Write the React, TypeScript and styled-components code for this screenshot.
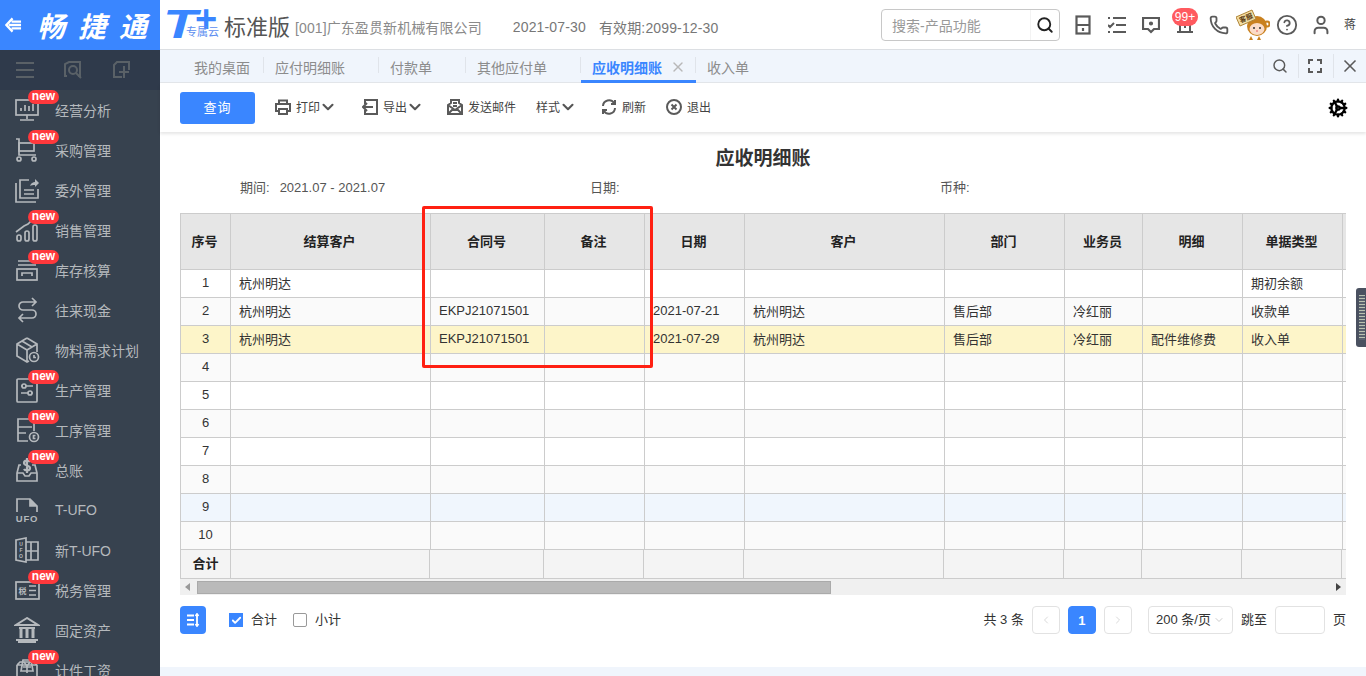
import React from "react";
import styled, { createGlobalStyle } from "styled-components";
import {
  Check,
  ChevronDown,
  ChevronLeft,
  ChevronRight,
  CircleHelp,
  Cog,
  Phone,
  Search,
  User,
  X,
} from "lucide-react";

const BLUE = "#3a86ff";
const FONT = `"Liberation Sans", "Noto Sans CJK SC", sans-serif`;

const GlobalStyle = createGlobalStyle`
  html, body {
    margin: 0;
    padding: 0;
    height: 100%;
    overflow: hidden;
    background: #fff;
    font-family: ${FONT};
  }
  #root {
    height: 100%;
  }
`;

const Page = styled.div`
  display: flex;
  width: 1366px;
  height: 676px;
  overflow: hidden;
  position: relative;
`;

const Sidebar = styled.aside`
  width: 160px;
  flex: none;
  display: flex;
  flex-direction: column;
  background: #37424f;
  overflow: hidden;
`;

const Brand = styled.div`
  height: 50px;
  flex: none;
  background: ${BLUE};
  color: #fff;
  display: flex;
  align-items: center;
  padding-left: 5px;
  gap: 15px;
`;

const BrandName = styled.span`
  font-size: 28px;
  font-weight: 700;
  font-style: italic;
  letter-spacing: 13px;
  white-space: nowrap;
`;

const ToolRow = styled.div`
  height: 40px;
  flex: none;
  background: #2f3a4b;
  color: #5a6167;
  display: flex;
  align-items: center;
  padding-left: 16px;
  gap: 30px;
`;

const MenuItem = styled.div`
  height: 40px;
  flex: none;
  position: relative;
  display: flex;
  align-items: center;
  padding-left: 14px;
  gap: 15px;
  color: #b5b9bd;
  font-size: 14px;
  white-space: nowrap;
`;

const NewBadge = styled.span`
  position: absolute;
  left: 28px;
  top: 0;
  width: 31px;
  height: 14px;
  border-radius: 7px;
  background: #ff383c;
  color: #fff;
  font-size: 12px;
  font-weight: 700;
  line-height: 13px;
  text-align: center;
`;

const MenuIcon = styled.svg`
  width: 26px;
  height: 26px;
  flex: none;
  fill: none;
  stroke: currentColor;
  stroke-width: 1.7;
`;

const Main = styled.main`
  flex: 1;
  min-width: 0;
  display: flex;
  flex-direction: column;
`;

const Header = styled.header`
  height: 50px;
  flex: none;
  box-sizing: border-box;
  border-bottom: 1px solid #dcdfe3;
  display: flex;
  align-items: center;
  padding: 0 10px 0 5px;
  white-space: nowrap;
`;

const LogoMark = styled.div`
  position: relative;
  width: 54px;
  height: 40px;
  flex: none;
  color: ${BLUE};
`;

const LogoT = styled.span`
  position: absolute;
  left: -2px;
  top: -2px;
  font-size: 40px;
  line-height: 42px;
  font-weight: 700;
  font-style: italic;
  transform: scaleX(1.4);
  transform-origin: left center;
`;

const LogoPlus = styled.span`
  position: absolute;
  left: 30px;
  top: -4px;
  font-size: 38px;
  line-height: 36px;
  font-weight: 700;
`;

const LogoCloud = styled.span`
  position: absolute;
  left: 21px;
  top: 21px;
  font-size: 11px;
  line-height: 12px;
  color: #5d8ef0;
`;

const Edition = styled.span`
  margin-left: 5px;
  font-size: 22px;
  color: #555;
`;

const Company = styled.span`
  margin-left: 5px;
  font-size: 14px;
  letter-spacing: 0.1px;
  color: #8a8a8a;
  padding-top: 5px;
`;

const HeaderDate = styled.span<{ $left: number }>`
  margin-left: ${(p) => p.$left}px;
  font-size: 14px;
  letter-spacing: 0.15px;
  color: #777;
  padding-top: 5px;
`;

const SearchBox = styled.div`
  margin-left: auto;
  width: 179px;
  height: 32px;
  box-sizing: border-box;
  border: 1px solid #c8c8c8;
  border-radius: 4px;
  display: flex;
  align-items: center;
  color: #999;
  font-size: 14px;
  flex: none;
`;

const SearchText = styled.span`
  flex: 1;
  padding-left: 10px;
`;

const SearchAction = styled.span`
  width: 28px;
  height: 30px;
  border-left: 1px solid #f3f3f3;
  color: #222;
  display: flex;
  align-items: center;
  justify-content: center;
`;

const HeadIcons = styled.div`
  margin-left: 6px;
  display: flex;
  align-items: center;
`;

const HeadIcon = styled.span`
  position: relative;
  width: 34px;
  height: 40px;
  color: #5a5a5a;
  display: flex;
  align-items: center;
  justify-content: center;
`;

const CountBadge = styled.span`
  position: absolute;
  left: 4px;
  top: 3px;
  width: 26px;
  height: 18px;
  border-radius: 9px;
  background: #ff5a5f;
  color: #fff;
  font-size: 12px;
  line-height: 18px;
  text-align: center;
`;

const UserName = styled.span`
  margin-left: 6px;
  font-size: 12px;
  color: #444;
  padding-bottom: 3px;
`;

const TabBar = styled.nav`
  height: 33px;
  flex: none;
  box-sizing: border-box;
  background: #f0f5fc;
  border-bottom: 1px solid #e3e6ea;
  display: flex;
  padding-left: 20px;
`;

const Tab = styled.div<{ $active?: boolean; $first?: boolean; $last?: boolean }>`
  position: relative;
  height: 33px;
  box-sizing: border-box;
  padding: ${(p) => (p.$first ? "0 14px" : "0 34px 0 11px")};
  display: flex;
  align-items: center;
  font-size: 14px;
  font-weight: ${(p) => (p.$active ? 700 : 400)};
  color: ${(p) => (p.$active ? BLUE : "#8c8c8c")};
  border-bottom: ${(p) => (p.$active ? `3px solid ${BLUE}` : "none")};
  padding-top: ${(p) => (p.$active ? "3px" : "0")};
  &::after {
    content: "";
    display: ${(p) => (p.$last ? "none" : "block")};
    position: absolute;
    right: 0;
    top: 7px;
    height: 16px;
    width: 1px;
    background: #e0e4ea;
  }
`;

const TabClose = styled(X)`
  position: absolute;
  right: 10px;
  top: 9px;
  color: #b8b8b8;
`;

const TabTools = styled.div`
  margin-left: auto;
  display: flex;
  padding-top: 4px;
  height: 24px;
`;

const TabTool = styled.span`
  width: 35px;
  height: 24px;
  border-left: 1px solid #e0e4ea;
  color: #5a5a5a;
  display: flex;
  align-items: center;
  justify-content: center;
  padding-right: 2px;
  box-sizing: border-box;
  &:last-child {
    width: 33px;
    padding-right: 0;
  }
`;

const Toolbar = styled.div`
  height: 49px;
  flex: none;
  display: flex;
  align-items: center;
  padding: 0 20px;
  box-shadow: 0 2px 3px rgba(0, 0, 0, 0.1);
  position: relative;
`;

const QueryButton = styled.button`
  width: 75px;
  height: 32px;
  margin: 1px 4px 0 0;
  border: none;
  border-radius: 3px;
  background: ${BLUE};
  color: #fff;
  font: 13px ${FONT};
  letter-spacing: 1px;
  padding: 0 0 3px;
`;

const ToolItem = styled.span<{ $gap: number }>`
  margin: 0 0 2px ${(p) => p.$gap}px;
  display: flex;
  align-items: center;
  gap: 5px;
  font-size: 12px;
  color: #444;
  white-space: nowrap;
`;

const ToolChevron = styled(ChevronDown)`
  margin: 0 -4px 0 -6px;
  color: #555;
`;

const ToolIcon = styled.svg`
  width: 16px;
  height: 16px;
  fill: none;
  stroke: #5a5a5a;
  stroke-width: 2;
`;

const GearSlot = styled.span`
  margin: 0 -2px 0 auto;
  display: flex;
  color: #000;
`;

const Content = styled.div`
  flex: 1;
  min-height: 0;
  padding: 0 20px;
`;

const Title = styled.h1`
  margin: 0;
  padding-top: 15px;
  height: 29px;
  font-size: 19px;
  line-height: 24px;
  font-weight: 700;
  color: #333;
  text-align: center;
`;

const Meta = styled.div`
  display: grid;
  grid-template-columns: repeat(3, 350px);
  padding-left: 60px;
  height: 37px;
  font-size: 13px;
  line-height: 24px;
  color: #555;
`;

const MetaValue = styled.span`
  margin-left: 10px;
`;

const Grid = styled.div`
  position: relative;
  width: 1166px;
`;

const Clip = styled.div`
  overflow: hidden;
`;

const Table = styled.table`
  table-layout: fixed;
  border-collapse: separate;
  border-spacing: 0;
  width: 1243px;
  font-size: 13px;
  color: #333;
`;

const HeadCell = styled.th`
  height: 57px;
  padding: 0 2px 3px 0;
  box-sizing: border-box;
  background: #e6e6e6;
  border-top: 1px solid #ccc;
  border-right: 1px solid #ccc;
  border-bottom: 1px solid #ccc;
  font-weight: 700;
  color: #222;
  &:first-child {
    border-left: 1px solid #ccc;
  }
`;

const Row = styled.tr<{ $tone?: string }>`
  background: ${(p) => p.$tone};
`;

const Cell = styled.td<{ $center?: boolean }>`
  height: 28px;
  box-sizing: border-box;
  padding: 0 ${(p) => (p.$center ? "0" : "8px")} 2px;
  border-right: 1px solid #ccc;
  border-bottom: 1px solid #ccc;
  text-align: ${(p) => (p.$center ? "center" : "left")};
  white-space: nowrap;
  overflow: hidden;
  &:first-child {
    border-left: 1px solid #ccc;
  }
`;

const TotalCell = styled.td`
  height: 29px;
  box-sizing: border-box;
  padding: 0 0 3px;
  background: #f4f4f4;
  border-right: 1px solid #ccc;
  border-bottom: 1px solid #ccc;
  text-align: center;
  font-weight: 700;
  color: #222;
  &:first-child {
    border-left: 1px solid #ccc;
  }
`;

const ScrollBar = styled.div`
  height: 16px;
  background: #f0f0f0;
  display: flex;
  align-items: center;
  justify-content: space-between;
  color: #555;
`;

const ScrollArrow = styled.span<{ $right?: boolean }>`
  width: 0;
  height: 0;
  margin: 0 5px;
  border-top: 4px solid transparent;
  border-bottom: 4px solid transparent;
  border-left: ${(p) => (p.$right ? "5px solid #444" : "0")};
  border-right: ${(p) => (p.$right ? "0" : "5px solid #999")};
`;

const ScrollThumb = styled.div`
  width: 634px;
  height: 13px;
  box-sizing: border-box;
  background: #bababa;
  border: 1px solid #aaa;
  margin-left: 2px;
  margin-right: auto;
`;

const Marker = styled.div`
  position: absolute;
  left: 242px;
  top: -7px;
  width: 231px;
  height: 162px;
  box-sizing: border-box;
  border: 3px solid #ff2012;
  border-radius: 2px;
  pointer-events: none;
`;

const Footer = styled.div`
  width: 1166px;
  height: 30px;
  margin-top: 10px;
  display: flex;
  align-items: center;
  font-size: 13px;
  color: #333;
`;

const FooterLabel = styled.span`
  padding-bottom: 3px;
`;

const SortButton = styled.span`
  width: 26px;
  height: 28px;
  border-radius: 4px;
  background: ${BLUE};
  color: #fff;
  display: flex;
  align-items: center;
  justify-content: center;
  margin-right: 23px;
`;

const CheckRow = styled.label`
  display: flex;
  align-items: center;
  gap: 8px;
  margin-right: 16px;
`;

const CheckBox = styled.span<{ $on?: boolean }>`
  width: 14px;
  height: 14px;
  box-sizing: border-box;
  border: 1px solid ${(p) => (p.$on ? BLUE : "#999")};
  border-radius: ${(p) => (p.$on ? "0" : "2px")};
  background: ${(p) => (p.$on ? BLUE : "#fff")};
  color: #fff;
  display: flex;
  align-items: center;
  justify-content: center;
`;

const Pager = styled.div`
  margin-left: auto;
  display: flex;
  align-items: center;
  gap: 8px;
  white-space: nowrap;
`;

const PageButton = styled.span<{ $active?: boolean }>`
  width: 28px;
  height: 28px;
  box-sizing: border-box;
  border: 1px solid ${(p) => (p.$active ? BLUE : "#e2e2e2")};
  border-radius: 4px;
  background: ${(p) => (p.$active ? BLUE : "#fff")};
  color: ${(p) => (p.$active ? "#fff" : "#ccc")};
  font-weight: ${(p) => (p.$active ? 700 : 400)};
  display: flex;
  align-items: center;
  justify-content: center;
`;

const PageSize = styled.span`
  width: 85px;
  height: 28px;
  margin-left: 8px;
  box-sizing: border-box;
  border: 1px solid #e2e2e2;
  border-radius: 4px;
  padding-left: 7px;
  display: flex;
  align-items: center;
  gap: 2px;
  color: #333;
`;

const PageInput = styled.span`
  width: 50px;
  height: 28px;
  box-sizing: border-box;
  border: 1px solid #e2e2e2;
  border-radius: 4px;
`;

const BottomStrip = styled.div`
  height: 9px;
  flex: none;
  background: #f0f5fc;
`;

const Handle = styled.div`
  position: absolute;
  right: 0;
  top: 288px;
  width: 10px;
  height: 59px;
  box-sizing: border-box;
  border-radius: 3px 0 0 3px;
  background: #4a5160;
  padding: 7px 1px 7px 3px;
`;

const HandleBars = styled.div`
  height: 100%;
  background: repeating-linear-gradient(
    to bottom,
    #b9c2b0 0,
    #b9c2b0 1px,
    #59616e 1px,
    #59616e 3px
  );
`;

const menuIcons: Record<string, React.ReactNode> = {
  monitor: (
    <>
      <rect x="2" y="3" width="22" height="15" />
      <path d="M13 18v4M6 23h14M7 14v-3M11 14V8M15 14v-5M19 14V7" />
    </>
  ),
  cart: (
    <>
      <path d="M2 2h3v16h17" />
      <rect x="5" y="6" width="15" height="8" />
      <circle cx="5" cy="22" r="2" />
      <circle cx="20" cy="22" r="2" />
    </>
  ),
  outsource: (
    <>
      <path d="M15 3H6v18h18v-9" />
      <path d="M2 6v19h20M10 13h10M10 17h10" />
      <path d="M16 9c1-3 3-4 5-4V2l4 4-4 4V8c-2 0-4 0-5 1z" fill="currentColor" stroke="none" />
    </>
  ),
  sales: (
    <>
      <path d="M2 15l8-6 4-2 6-6" />
      <rect x="3" y="18" width="4" height="6" rx="2" />
      <rect x="11" y="14" width="4" height="10" rx="2" />
      <rect x="19" y="8" width="4" height="16" rx="2" />
    </>
  ),
  stock: (
    <>
      <path d="M4 4h18M4 8h18" />
      <rect x="3" y="12" width="20" height="11" />
      <path d="M8 19v-3h10v3" />
    </>
  ),
  exchange: (
    <path d="M18 1l4 4-4 4M22 5H9a4 4 0 0 0-4 4 4 4 0 0 0 4 4h9a4 4 0 0 1 4 4 4 4 0 0 1-4 4H5M9 17l-4 4 4 4" />
  ),
  box: (
    <>
      <path d="M13 1l10 6v8M13 1L3 7v12l10 6 2-1M3 7l10 6 10-6M13 13v12M8 4l10 6" />
      <circle cx="20" cy="20" r="4.5" />
      <path d="M20 18v2.500h2" />
    </>
  ),
  sliders: (
    <>
      <rect x="3" y="2" width="20" height="23" rx="1" />
      <path d="M7 9h12M7 16h12" />
      <circle cx="10" cy="9" r="2" fill="#37424f" />
      <circle cx="16" cy="16" r="2" fill="#37424f" />
    </>
  ),
  doc: (
    <>
      <path d="M14 24H4V2h12l4 4v8M4 10h14M4 16h8" />
      <circle cx="20" cy="20" r="4.500" />
      <path d="M21.500 18.500h-2v3h2" />
    </>
  ),
  ledger: (
    <>
      <path d="M7 8H5l-2 8v8h20v-8l-2-8h-3" />
      <path d="M3 16h6l2 3h4l2-3h6" />
      <path d="M16 5c-1-2-6-2-6 1s6 2 6 5-5 3-6 1M13 1v15" strokeWidth="2.200" />
    </>
  ),
  ufo: (
    <>
      <path d="M3 15V2h13l7 7v6" />
      <path d="M16 2v7h7" fill="currentColor" />
      <text x="13" y="25" textAnchor="middle" fontSize="9.500" fontWeight="700" letterSpacing="0.8" fill="currentColor" stroke="none">UFO</text>
    </>
  ),
  newUfo: (
    <>
      <path d="M2 3l10-2v24L2 23zM12 5h12v18H12M17 5v18M12 14h12" />
      <text x="7" y="9" textAnchor="middle" fontSize="5" fontWeight="700" fill="currentColor" stroke="none">U</text>
      <text x="7" y="15" textAnchor="middle" fontSize="5" fontWeight="700" fill="currentColor" stroke="none">F</text>
      <text x="7" y="21" textAnchor="middle" fontSize="5" fontWeight="700" fill="currentColor" stroke="none">O</text>
    </>
  ),
  tax: (
    <>
      <rect x="2" y="5" width="23" height="17" />
      <text x="8.500" y="17" textAnchor="middle" fontSize="8" fontWeight="700" fill="currentColor" stroke="none">税</text>
      <path d="M15 9h7M15 13.500h7M15 18h7" />
    </>
  ),
  bank: (
    <>
      <path d="M13 1L2 8h22zM5 11h16M2 23h22M4 25h18" strokeWidth="2" />
      <path d="M7 12v9M13 12v9M19 12v9" strokeWidth="3" />
    </>
  ),
  wage: (
    <>
      <path d="M3 8v17h20V8M3 8l3-3h14l3 3M3 8h20" />
      <path d="M9 3h8l2 11H7zM10 5l3 4 3-4M9 10h8M13 9v7" />
    </>
  ),
};

const menu = [
  { name: "经营分析", icon: "monitor", isNew: true },
  { name: "采购管理", icon: "cart", isNew: true },
  { name: "委外管理", icon: "outsource" },
  { name: "销售管理", icon: "sales", isNew: true },
  { name: "库存核算", icon: "stock", isNew: true },
  { name: "往来现金", icon: "exchange" },
  { name: "物料需求计划", icon: "box" },
  { name: "生产管理", icon: "sliders", isNew: true },
  { name: "工序管理", icon: "doc", isNew: true },
  { name: "总账", icon: "ledger", isNew: true },
  { name: "T-UFO", icon: "ufo" },
  { name: "新T-UFO", icon: "newUfo" },
  { name: "税务管理", icon: "tax", isNew: true },
  { name: "固定资产", icon: "bank" },
  { name: "计件工资", icon: "wage", isNew: true },
];

const tabs = ["应付明细账", "付款单", "其他应付单"];

const columns = [
  { title: "序号", width: 51 },
  { title: "结算客户", width: 200 },
  { title: "合同号", width: 114 },
  { title: "备注", width: 100 },
  { title: "日期", width: 100 },
  { title: "客户", width: 200 },
  { title: "部门", width: 120 },
  { title: "业务员", width: 78 },
  { title: "明细", width: 100 },
  { title: "单据类型", width: 100 },
  { title: "", width: 80 },
];

const totalWidths = [51, 199, 114, 100, 100, 200, 120, 78, 100, 100, 81];

const rows: { cells: string[]; tone: string }[] = [
  { cells: ["杭州明达", "", "", "", "", "", "", "", "期初余额", ""], tone: "#fff" },
  {
    cells: ["杭州明达", "EKPJ21071501", "", "2021-07-21", "杭州明达", "售后部", "冷红丽", "", "收款单", ""],
    tone: "#fafafa",
  },
  {
    cells: ["杭州明达", "EKPJ21071501", "", "2021-07-29", "杭州明达", "售后部", "冷红丽", "配件维修费", "收入单", ""],
    tone: "#fdf5c9",
  },
  ...[4, 5, 6, 7, 8, 9, 10].map((n) => ({
    cells: Array(10).fill(""),
    tone: n === 9 ? "#f0f6fd" : n % 2 === 0 ? "#fafafa" : "#fff",
  })),
];

const Monkey = () => (
  <svg width="34" height="32" viewBox="0 0 34 32">
    <circle cx="31" cy="15" r="2.500" fill="none" stroke="#c9811f" strokeWidth="2" />
    <circle cx="21" cy="17" r="10" fill="#c9811f" />
    <ellipse cx="21" cy="20" rx="7.500" ry="6" fill="#fbdcc8" />
    <circle cx="18" cy="19" r="1" fill="#333" />
    <circle cx="24" cy="19" r="1" fill="#333" />
    <circle cx="21" cy="22" r="1" fill="#e88" />
    <path d="M15 27l-2 4h4zM23 27l2 4h-4z" fill="#c9811f" />
    <path d="M0 8l16-7 4 9-16 7z" fill="#f2dfa6" stroke="#b08436" />
    <text x="10" y="11.500" fontSize="7" fontWeight="700" textAnchor="middle" fill="#5b3b12" transform="rotate(-22 10 9)">
      客服
    </text>
  </svg>
);

export default function App() {
  return (
    <Page>
      <GlobalStyle />
      <Sidebar>
        <Brand>
          <svg width="18" height="18" viewBox="0 0 18 18" fill="none" stroke="#fff" strokeWidth="2.400">
            <path d="M8 2L1.500 9 8 16M7 5.500h10M4 9h13M7 12.500h10" />
          </svg>
          <BrandName>畅捷通</BrandName>
        </Brand>
        <ToolRow>
          <svg width="18" height="18" viewBox="0 0 18 18" stroke="currentColor" strokeWidth="2" fill="none">
            <path d="M0 2h18M0 9h18M0 16h18" />
          </svg>
          <svg width="18" height="18" viewBox="0 0 18 18" stroke="currentColor" strokeWidth="2" fill="none">
            <path d="M3 15H1V3l4-2h11v14h-2" />
            <circle cx="9" cy="9" r="4" />
            <path d="M12 12l5 5" />
          </svg>
          <svg width="18" height="18" viewBox="0 0 18 18" stroke="currentColor" strokeWidth="2" fill="none">
            <path d="M10 16H2V4l3-3h12v8" />
            <path d="M12 5v12M7 11h10" />
          </svg>
        </ToolRow>
        {menu.map((item) => (
          <MenuItem key={item.name}>
            <MenuIcon viewBox="0 0 26 26">{menuIcons[item.icon]}</MenuIcon>
            {item.name}
            {item.isNew && <NewBadge>new</NewBadge>}
          </MenuItem>
        ))}
      </Sidebar>

      <Main>
        <Header>
          <LogoMark>
            <LogoT>T</LogoT>
            <LogoPlus>+</LogoPlus>
            <LogoCloud>专属云</LogoCloud>
          </LogoMark>
          <Edition>标准版</Edition>
          <Company>[001]广东盈贯新机械有限公司</Company>
          <HeaderDate $left={31}>2021-07-30</HeaderDate>
          <HeaderDate $left={13}>有效期:2099-12-30</HeaderDate>
          <SearchBox>
            <SearchText>搜索-产品功能</SearchText>
            <SearchAction>
              <Search size={18} strokeWidth={2.500} />
            </SearchAction>
          </SearchBox>
          <HeadIcons>
            <HeadIcon>
              <svg width="16" height="20" viewBox="0 0 16 20" fill="none" stroke="currentColor" strokeWidth="2.200">
                <rect x="1.500" y="1.500" width="13" height="17" />
                <path d="M1.500 10h13M8 13v3" />
              </svg>
            </HeadIcon>
            <HeadIcon>
              <svg width="18" height="18" viewBox="0 0 18 18" fill="none" stroke="currentColor" strokeWidth="2">
                <path d="M5 2h13M0 2h2M8 9h10M0 9l2 2 4-4M0 16h2M5 16h13" />
              </svg>
            </HeadIcon>
            <HeadIcon>
              <svg width="18" height="18" viewBox="0 0 18 18" fill="none" stroke="currentColor" strokeWidth="2.200">
                <path d="M1 2h16v11h-5l-3 3-3-3H1z" />
                <circle cx="9" cy="7.500" r="1" fill="currentColor" />
              </svg>
            </HeadIcon>
            <HeadIcon>
              <svg width="18" height="20" viewBox="0 0 18 20" fill="none" stroke="currentColor" strokeWidth="2">
                <path d="M4 16V7a5 5 0 0 1 10 0v9M1 17h16M8 12h2" />
              </svg>
              <CountBadge>99+</CountBadge>
            </HeadIcon>
            <HeadIcon>
              <Phone size={20} strokeWidth={2.200} />
            </HeadIcon>
            <HeadIcon>
              <Monkey />
            </HeadIcon>
            <HeadIcon>
              <CircleHelp size={22} strokeWidth={2} />
            </HeadIcon>
            <HeadIcon>
              <User size={22} strokeWidth={2.200} />
            </HeadIcon>
          </HeadIcons>
          <UserName>蒋</UserName>
        </Header>

        <TabBar>
          <Tab $first>我的桌面</Tab>
          {tabs.map((tab) => (
            <Tab key={tab}>{tab}</Tab>
          ))}
          <Tab $active>
            应收明细账
            <TabClose size={16} strokeWidth={2} />
          </Tab>
          <Tab $last>收入单</Tab>
          <TabTools>
            <TabTool>
              <Search size={16} strokeWidth={2.200} />
            </TabTool>
            <TabTool>
              <svg width="14" height="14" viewBox="0 0 14 14" fill="none" stroke="currentColor" strokeWidth="2">
                <path d="M1 5V1h4M9 1h4v4M13 9v4H9M5 13H1V9" />
              </svg>
            </TabTool>
            <TabTool>
              <X size={20} strokeWidth={2} />
            </TabTool>
          </TabTools>
        </TabBar>

        <Toolbar>
          <QueryButton>查询</QueryButton>
          <ToolItem $gap={16}>
            <ToolIcon viewBox="0 0 16 16">
              <path d="M4 5V1.500h8V5M4 12H1V5h14v7h-3" />
              <rect x="4" y="10" width="8" height="5" />
            </ToolIcon>
            打印
            <ToolChevron size={18} strokeWidth={2.800} />
          </ToolItem>
          <ToolItem $gap={29}>
            <ToolIcon viewBox="0 0 16 16">
              <path d="M3 5V1h12v14H3v-4M11 8H1M5 4L1 8l4 4" />
            </ToolIcon>
            导出
            <ToolChevron size={18} strokeWidth={2.800} />
          </ToolItem>
          <ToolItem $gap={27}>
            <ToolIcon viewBox="0 0 16 16">
              <path d="M1 6l3-2V1h8v3l3 2v9H1zM1 6l7 5 7-5M1 15l5-5M15 15l-5-5M6 4h4M6 7h4" />
            </ToolIcon>
            发送邮件
          </ToolItem>
          <ToolItem $gap={20}>
            样式
            <ToolChevron size={18} strokeWidth={2.800} />
          </ToolItem>
          <ToolItem $gap={28}>
            <ToolIcon viewBox="0 0 16 16">
              <path d="M2 7a6 6 0 0 1 11-3M14 9a6 6 0 0 1-11 3M14 1v4h-4M2 15v-4h4" />
            </ToolIcon>
            刷新
          </ToolItem>
          <ToolItem $gap={20}>
            <ToolIcon viewBox="0 0 16 16">
              <circle cx="8" cy="8" r="7" />
              <path d="M5.500 5.500l5 5M10.500 5.500l-5 5" />
            </ToolIcon>
            退出
          </ToolItem>
          <GearSlot>
            <Cog size={20} strokeWidth={2.800} />
          </GearSlot>
        </Toolbar>

        <Content>
          <Title>应收明细账</Title>
          <Meta>
            <span>
              期间:
              <MetaValue>2021.07 - 2021.07</MetaValue>
            </span>
            <span>日期:</span>
            <span>币种:</span>
          </Meta>
          <Grid>
            <Clip>
              <Table>
                <colgroup>
                  {columns.map((c, i) => (
                    <col key={i} style={{ width: c.width }} />
                  ))}
                </colgroup>
                <thead>
                  <tr>
                    {columns.map((c, i) => (
                      <HeadCell key={i}>{c.title}</HeadCell>
                    ))}
                  </tr>
                </thead>
                <tbody>
                  {rows.map((row, r) => (
                    <Row key={r} $tone={row.tone}>
                      <Cell $center>{r + 1}</Cell>
                      {row.cells.map((text, c) => (
                        <Cell key={c}>{text}</Cell>
                      ))}
                    </Row>
                  ))}
                </tbody>
              </Table>
              <Table>
                <colgroup>
                  {totalWidths.map((w, i) => (
                    <col key={i} style={{ width: w }} />
                  ))}
                </colgroup>
                <tbody>
                  <tr>
                    <TotalCell>合计</TotalCell>
                    {totalWidths.slice(1).map((_, i) => (
                      <TotalCell key={i} />
                    ))}
                  </tr>
                </tbody>
              </Table>
            </Clip>
            <ScrollBar>
              <ScrollArrow />
              <ScrollThumb />
              <ScrollArrow $right />
            </ScrollBar>
            <Marker />
          </Grid>
          <Footer>
            <SortButton>
              <svg width="14" height="14" viewBox="0 0 14 14" fill="none" stroke="currentColor" strokeWidth="1.800">
                <path d="M1 2.500h7M1 7h7M1 11.500h7M11 1v12M9.500 3L11 1l1.500 2M9.500 11l1.500 2 1.500-2" />
              </svg>
            </SortButton>
            <CheckRow>
              <CheckBox $on>
                <Check size={11} strokeWidth={4} />
              </CheckBox>
              <FooterLabel>合计</FooterLabel>
            </CheckRow>
            <CheckRow>
              <CheckBox />
              <FooterLabel>小计</FooterLabel>
            </CheckRow>
            <Pager>
              <FooterLabel>共 3 条</FooterLabel>
              <PageButton>
                <ChevronLeft size={12} strokeWidth={1.500} />
              </PageButton>
              <PageButton $active>1</PageButton>
              <PageButton>
                <ChevronRight size={12} strokeWidth={1.500} />
              </PageButton>
              <PageSize>
                <FooterLabel>200 条/页</FooterLabel>
                <ChevronDown size={12} strokeWidth={1.500} color="#bbb" />
              </PageSize>
              <FooterLabel>跳至</FooterLabel>
              <PageInput />
              <FooterLabel>页</FooterLabel>
            </Pager>
          </Footer>
        </Content>
        <BottomStrip />
      </Main>
      <Handle>
        <HandleBars />
      </Handle>
    </Page>
  );
}
